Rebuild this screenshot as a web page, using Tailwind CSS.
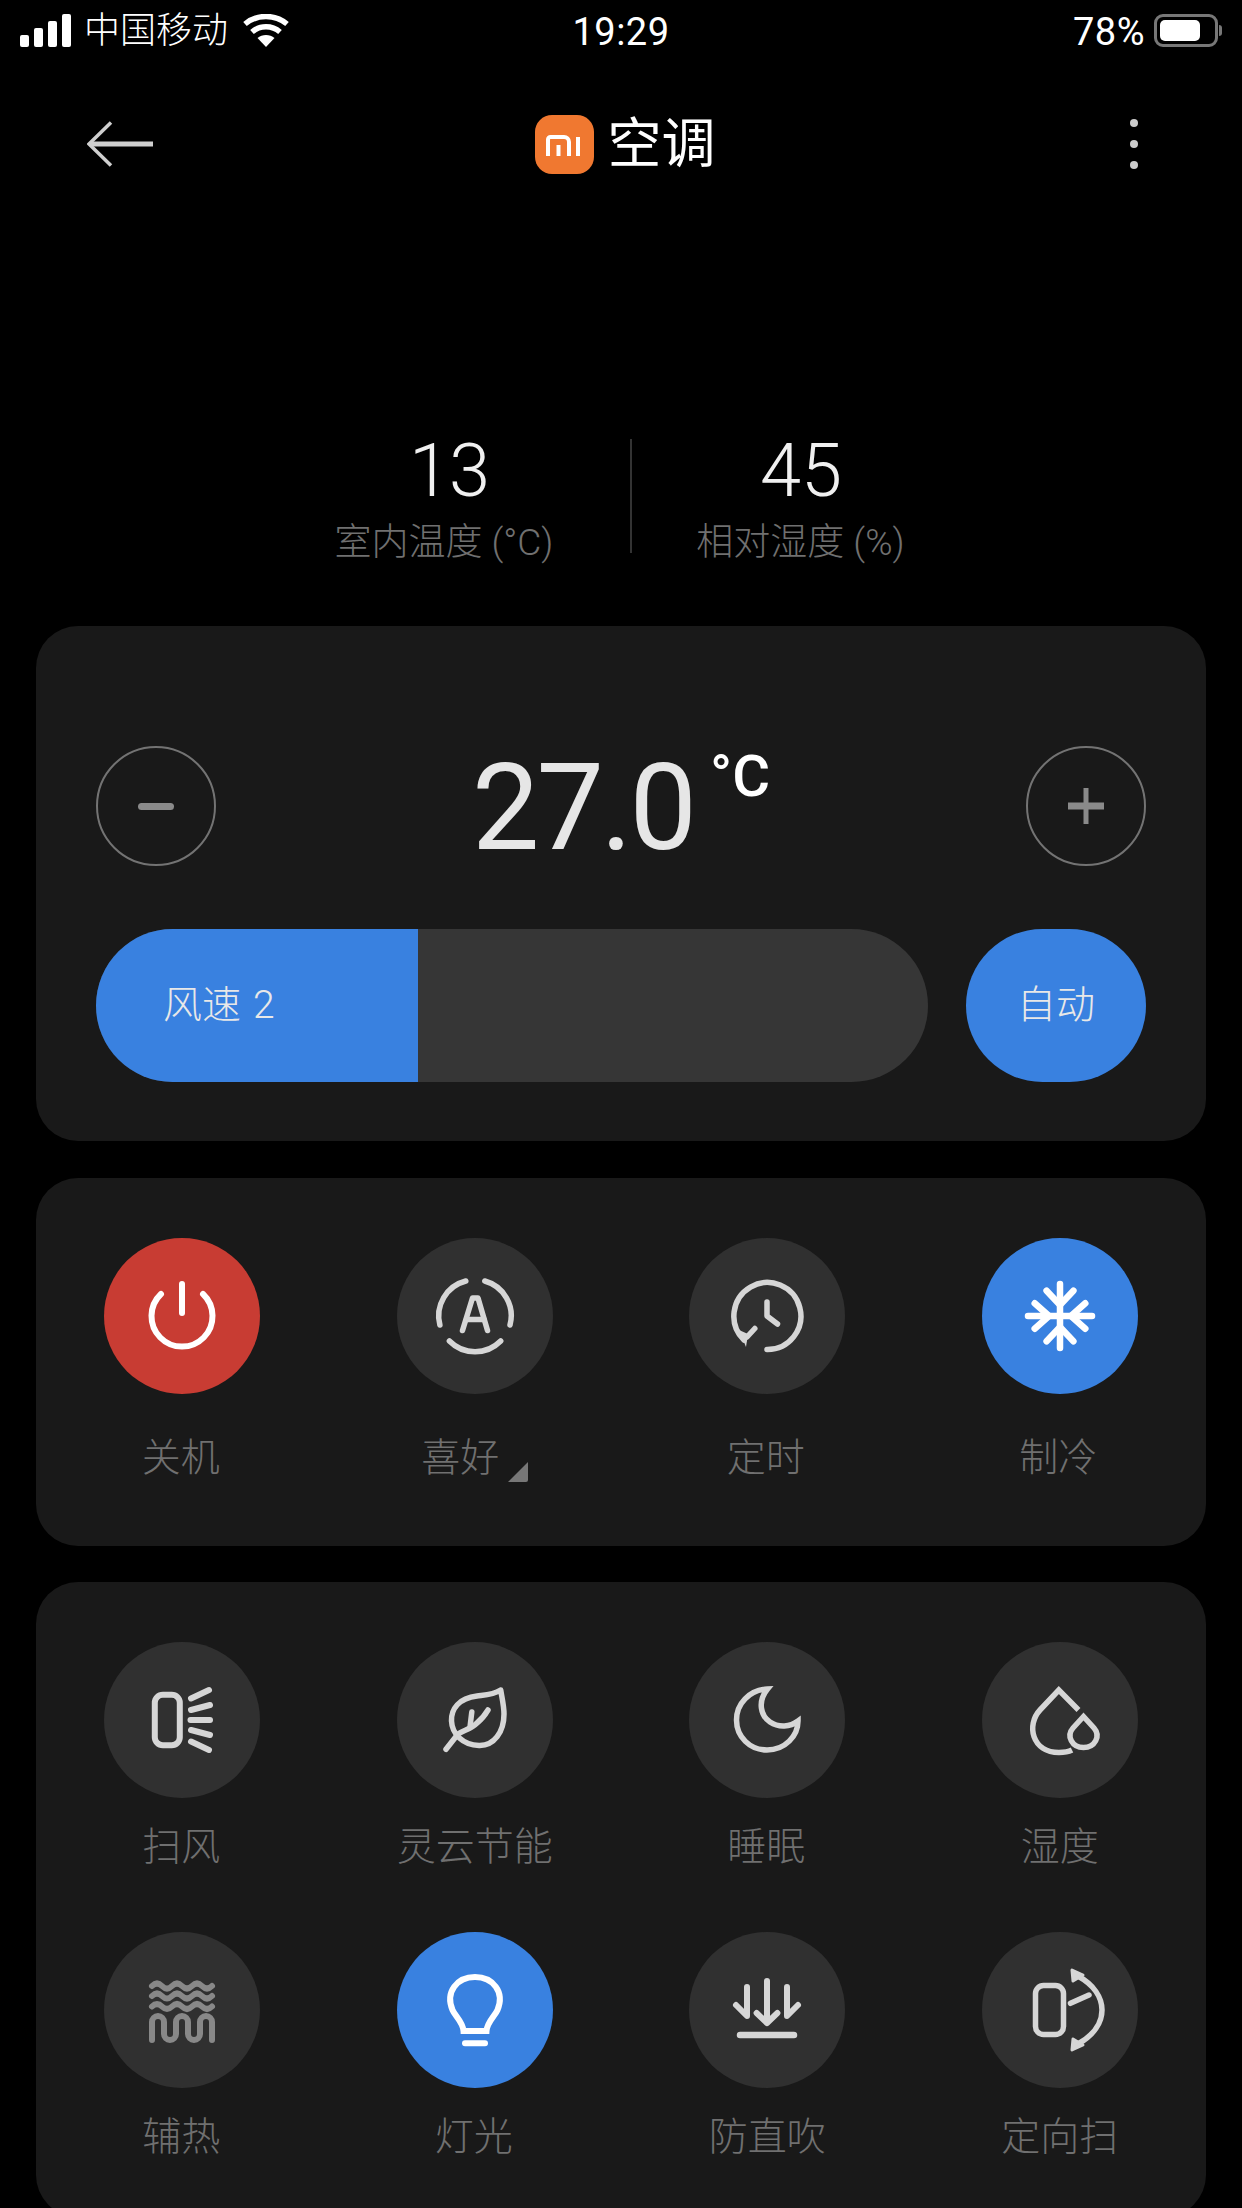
<!DOCTYPE html>
<html lang="zh-CN">
<head>
  <meta charset="UTF-8">
  <meta name="viewport" content="width=device-width, initial-scale=1.0">
  <title>空调</title>
  <script src="https://cdn.jsdelivr.net/npm/@tailwindcss/browser@4"></script>
</head>
<body class="bg-black">
<div class="w-[1242px] h-[2208px] overflow-hidden bg-black font-[Roboto,'Noto_Sans_CJK_SC',sans-serif]">

  <!-- Status bar -->
  <div class="h-[60px] grid grid-cols-3 items-center text-white text-[36px] pt-[1px]">
    <div class="flex items-center pl-[20px]">
      <div class="flex items-end gap-[5px] h-[33px]">
        <span class="w-[9px] h-[12px] rounded-[2px] bg-white"></span>
        <span class="w-[9px] h-[19px] rounded-[2px] bg-white"></span>
        <span class="w-[9px] h-[26px] rounded-[2px] bg-white"></span>
        <span class="w-[9px] h-[33px] rounded-[2px] bg-white"></span>
      </div>
      <span class="ml-[13px] leading-none whitespace-nowrap font-light">中国移动</span>
      <svg class="ml-[15px]" width="46" height="33" viewBox="0 0 46 33" fill="none" stroke="white" stroke-width="5.5">
        <path d="M2 10C14 0 32 0 44 10"/>
        <path d="M9 18C17 11 29 11 37 18"/>
        <path d="M23 33L14.500 24C19 20 27 20 31.500 24Z" fill="white" stroke="none"/>
      </svg>
    </div>
    <div class="text-center leading-none text-[38px] tracking-[0.5px] pt-[2px]">19:29</div>
    <div class="flex items-center justify-end pr-[20px]">
      <span class="leading-none text-[38px] tracking-[0.5px] pt-[2px]">78%</span>
      <div class="ml-[9px] w-[64px] h-[33px] rounded-[9px] border-[3px] border-[#777] p-[3px]">
        <div class="w-[40px] h-full rounded-[5px] bg-white"></div>
      </div>
      <span class="ml-[1px] w-[3px] h-[11px] rounded-r-full bg-[#777]"></span>
    </div>
  </div>

  <!-- Header -->
  <div class="h-[168px] grid grid-cols-[1fr_auto_1fr] items-center px-[87px]">
    <svg width="66" height="46" viewBox="0 0 66 46" fill="none" stroke="#cfcfcf">
      <path d="M66 23H4" stroke-width="5"/>
      <path d="M24 1.500L2 23L24 44.500" stroke-width="3.500"/>
    </svg>
    <div class="flex items-center pl-[8px]">
      <div class="w-[59px] h-[59px] rounded-[17px] bg-[#f07830] flex items-center justify-center">
        <svg class="mt-[3px]" width="36" height="22" viewBox="0 0 36 22" fill="none" stroke="white" stroke-width="4">
          <path d="M2 21V4.500a2.500 2.500 0 0 1 2.500-2.500H18a5 5 0 0 1 5 5V21"/>
          <path d="M12.500 10V21"/>
          <path d="M32 2V21"/>
        </svg>
      </div>
      <span class="ml-[14px] text-white text-[54px] leading-none pt-[2px]">空调</span>
    </div>
    <div class="flex flex-col items-end gap-[13px] mr-[17px]">
      <span class="w-[8px] h-[8px] rounded-full bg-[#ccc]"></span>
      <span class="w-[8px] h-[8px] rounded-full bg-[#ccc]"></span>
      <span class="w-[8px] h-[8px] rounded-full bg-[#ccc]"></span>
    </div>
  </div>

  <!-- Indoor readings -->
  <div class="h-[398px] pt-[208px] flex items-start">
    <div class="w-[630px] pl-[258px] text-center">
      <div class="pl-[10px] text-[#f0f0f0] text-[74px] leading-[70px] font-light tracking-[-1px]">13</div>
      <div class="mt-[13px] text-[#707070] text-[37px] leading-[48px] whitespace-nowrap font-light">室内温度 (°C)</div>
    </div>
    <div class="w-[2px] h-[114px] mt-[3px] bg-[#333]"></div>
    <div class="w-[340px] text-center">
      <div class="pr-[2px] text-[#f0f0f0] text-[74px] leading-[70px] font-light">45</div>
      <div class="mt-[13px] pr-[3px] text-[#707070] text-[37px] leading-[48px] whitespace-nowrap font-light">相对湿度 (%)</div>
    </div>
  </div>

  <!-- Temperature + fan speed -->
  <div class="mx-[36px] h-[515px] rounded-[42px] bg-[#191919] px-[60px] pt-[120px]">
    <div class="flex items-center justify-between h-[120px]">
      <div class="w-[120px] h-[120px] rounded-full border-[2.5px] border-[#737373] flex items-center justify-center">
        <span class="w-[36px] h-[7px] rounded-full bg-[#8a8a8a]"></span>
      </div>
      <div class="flex items-start text-[#e6e6e6]">
        <span class="mt-[3px] text-[120px] leading-[120px] tracking-[-3px]">27.0</span>
        <span class="ml-[16px] mt-[1px] text-white text-[58px] leading-[60px] font-medium">°C</span>
      </div>
      <div class="w-[120px] h-[120px] rounded-full border-[2.5px] border-[#737373] flex items-center justify-center">
        <svg width="36" height="36" viewBox="0 0 36 36" fill="none" stroke="#8a8a8a" stroke-linecap="round">
          <path d="M0 18H36" stroke-width="7"/>
          <path d="M18 0V36" stroke-width="5"/>
        </svg>
      </div>
    </div>
    <div class="mt-[63px] flex items-center">
      <div class="w-[833px] h-[153px] rounded-full overflow-hidden bg-[#363636]">
        <div class="w-[322px] h-full bg-[#3981e0] pl-[67px] flex items-center text-[#e8e8e8] text-[39px] leading-none font-light">风速<span class="ml-[12px]">2</span></div>
      </div>
      <div class="ml-[38px] w-[180px] h-[153px] rounded-full bg-[#3981e0] flex items-center justify-center text-[#e8e8e8] text-[39px] leading-none font-light">自动</div>
    </div>
  </div>

  <!-- Main controls -->
  <div class="mt-[37px] mx-[36px] h-[368px] rounded-[42px] bg-[#191919] pt-[60px] grid grid-cols-4 items-start">
    <div class="flex flex-col items-center">
      <div class="w-[156px] h-[156px] rounded-full bg-[#c83c33]">
        <svg width="156" height="156" viewBox="0 0 156 156" fill="none" stroke="white" stroke-width="6" stroke-linecap="round">
          <path d="M57 56A30.500 30.500 0 1 0 99 56"/>
          <path d="M78 46V75"/>
        </svg>
      </div>
      <div class="mt-[44px] pr-[3px] text-[#707070] text-[39px] leading-[40px] font-light">关机</div>
    </div>
    <div class="flex flex-col items-center">
      <div class="w-[156px] h-[156px] rounded-full bg-[#303030]">
        <svg width="156" height="156" viewBox="0 0 156 156" fill="none" stroke="#d6d6d6" stroke-width="5.500" stroke-linecap="round" stroke-linejoin="round">
          <path d="M68.800 43A36 36 0 0 0 42.900 87"/>
          <path d="M87.800 43A36 36 0 0 1 113 87"/>
          <path d="M52.400 103A36 36 0 0 0 103.700 103"/>
          <path d="M65.500 92.500L75.500 60H81L90.500 92.500"/>
          <path d="M69.500 81.500H87"/>
        </svg>
      </div>
      <div class="mt-[44px] flex items-start">
        <span class="text-[#707070] text-[39px] leading-[40px] font-light">喜好</span>
        <svg class="ml-[9px] mt-[24px]" width="20" height="20" viewBox="0 0 20 20">
          <path d="M20 0V18a2 2 0 0 1-2 2H0Z" fill="#777"/>
        </svg>
      </div>
    </div>
    <div class="flex flex-col items-center">
      <div class="w-[156px] h-[156px] rounded-full bg-[#303030]">
        <svg width="156" height="156" viewBox="0 0 156 156" fill="none" stroke="#d6d6d6" stroke-width="5.500" stroke-linecap="round" stroke-linejoin="round">
          <path d="M78 111.500A33.500 33.500 0 1 0 55 102"/>
          <path d="M78 64V78L88.500 86"/>
          <path d="M65.800 90.500L58 99"/>
          <path d="M50 92L57 109L59 96Z" fill="#d6d6d6" stroke="none"/>
        </svg>
      </div>
      <div class="mt-[44px] pr-[3px] text-[#707070] text-[39px] leading-[40px] font-light">定时</div>
    </div>
    <div class="flex flex-col items-center">
      <div class="w-[156px] h-[156px] rounded-full bg-[#3981e0]">
        <svg width="156" height="156" viewBox="0 0 156 156" fill="none" stroke="white" stroke-width="6.500" stroke-linecap="round" stroke-linejoin="round">
          <path d="M78 46V110"/>
          <path d="M46 78H110"/>
          <path d="M64.600 52.700L78 67L91.400 52.700"/>
          <path d="M64.600 103.300L78 89L91.400 103.300"/>
          <path d="M52.700 65.300L67 78L52.700 90.700"/>
          <path d="M103.300 65.300L89 78L103.300 90.700"/>
        </svg>
      </div>
      <div class="mt-[44px] pr-[3px] text-[#707070] text-[39px] leading-[40px] font-light">制冷</div>
    </div>
  </div>

  <!-- Function grid -->
  <div class="mt-[36px] mx-[36px] rounded-[42px] bg-[#191919] pt-[60px] pb-[60px] grid grid-cols-4 gap-y-[65px] items-start">
    <div class="flex flex-col items-center">
      <div class="w-[156px] h-[156px] rounded-full bg-[#303030]">
        <svg width="156" height="156" viewBox="0 0 156 156" fill="none" stroke="#d6d6d6" stroke-width="6" stroke-linecap="round">
          <rect x="50.800" y="52.700" width="25" height="50.600" rx="8"/>
          <path d="M87 56.500L105 48"/>
          <path d="M87 68L106 63"/>
          <path d="M86.500 78H106"/>
          <path d="M87 88L106 93"/>
          <path d="M87 99.500L105 108"/>
        </svg>
      </div>
      <div class="mt-[29px] pr-[2px] text-[#707070] text-[39px] leading-[40px] font-light">扫风</div>
    </div>
    <div class="flex flex-col items-center">
      <div class="w-[156px] h-[156px] rounded-full bg-[#303030]">
        <svg width="156" height="156" viewBox="0 0 156 156" fill="none" stroke="#d6d6d6" stroke-width="5.500" stroke-linecap="round" stroke-linejoin="round">
          <path d="M103.700 48C96 53 88 53 80 54C62 56 54 67 54.500 79C55 92 66 103 82 103.500C97 104 107 90 107 72C107 64 105 56 103.700 48Z"/>
          <path d="M49 107.300L61 92C67 88 74 87 80 81C85 77 88 73 91 68"/>
          <path d="M74.800 70L73 85"/>
        </svg>
      </div>
      <div class="mt-[29px] text-[#707070] text-[39px] leading-[40px] font-light">灵云节能</div>
    </div>
    <div class="flex flex-col items-center">
      <div class="w-[156px] h-[156px] rounded-full bg-[#303030]">
        <svg width="156" height="156" viewBox="0 0 156 156" fill="none" stroke="#d6d6d6" stroke-width="5.500" stroke-linejoin="miter">
          <path d="M78.500 47C60 48 47.500 62 47.500 78C47.500 95 61 108 78 108C96 108 109 94 109 79C101 85 90 86 81 80C72 74 68 60 78.500 47Z"/>
        </svg>
      </div>
      <div class="mt-[29px] pr-[2px] text-[#707070] text-[39px] leading-[40px] font-light">睡眠</div>
    </div>
    <div class="flex flex-col items-center">
      <div class="w-[156px] h-[156px] rounded-full bg-[#303030]">
        <svg width="156" height="156" viewBox="0 0 156 156" fill="none" stroke="#d6d6d6" stroke-width="5.500">
          <path d="M96.500 68L76.800 48L58 68C44 83 50 110.500 77 110.500C81 110.500 86 110 90 108"/>
          <path d="M101.500 74.500L91 86C84 94 90 105.500 101.500 105.500C113 105.500 119 94 112 86Z"/>
        </svg>
      </div>
      <div class="mt-[29px] text-[#707070] text-[39px] leading-[40px] font-light">湿度</div>
    </div>

    <div class="flex flex-col items-center">
      <div class="w-[156px] h-[156px] rounded-full bg-[#303030]">
        <svg width="156" height="156" viewBox="0 0 156 156" fill="none" stroke="#888" stroke-width="6" stroke-linecap="round" stroke-linejoin="round">
          <path d="M48 54q5-5 10 0t10 0t10 0t10 0t10 0t10 0"/>
          <path d="M48 64q5-5 10 0t10 0t10 0t10 0t10 0t10 0"/>
          <path d="M48 74.500q5-5 10 0t10 0t10 0t10 0t10 0t10 0"/>
          <path d="M48 108V90a6 6 0 0 1 12 0V102a6 6 0 0 0 12 0V90a6 6 0 0 1 12 0V102a6 6 0 0 0 12 0V90a6 6 0 0 1 12 0V108"/>
        </svg>
      </div>
      <div class="mt-[29px] pr-[2px] text-[#707070] text-[39px] leading-[40px] font-light">辅热</div>
    </div>
    <div class="flex flex-col items-center">
      <div class="w-[156px] h-[156px] rounded-full bg-[#3981e0]">
        <svg width="156" height="156" viewBox="0 0 156 156" fill="none" stroke="white" stroke-width="6">
          <path d="M66.500 99C66 90 58 84 55.500 78C48 60 60 45 78 45C96 45 108 60 100.500 78C98 84 90 90 89.500 99Z"/>
          <path d="M68 111.300H88" stroke-linecap="round"/>
        </svg>
      </div>
      <div class="mt-[29px] pr-[2px] text-[#707070] text-[39px] leading-[40px] font-light">灯光</div>
    </div>
    <div class="flex flex-col items-center">
      <div class="w-[156px] h-[156px] rounded-full bg-[#303030]">
        <svg width="156" height="156" viewBox="0 0 156 156" fill="none" stroke="#d6d6d6" stroke-width="6" stroke-linecap="round" stroke-linejoin="round">
          <path d="M78 49V90"/>
          <path d="M67.600 81L78 91L88.400 81"/>
          <path d="M58 55V84L47 73"/>
          <path d="M98 55V84L109 73"/>
          <path d="M51 103H105" stroke-width="6.500"/>
        </svg>
      </div>
      <div class="mt-[29px] text-[#707070] text-[39px] leading-[40px] font-light">防直吹</div>
    </div>
    <div class="flex flex-col items-center">
      <div class="w-[156px] h-[156px] rounded-full bg-[#303030]">
        <svg width="156" height="156" viewBox="0 0 156 156" fill="none" stroke="#d6d6d6" stroke-width="5.500" stroke-linecap="round">
          <rect x="53.500" y="53.500" width="28" height="49" rx="8"/>
          <path d="M88.500 71.300L107 63"/>
          <path d="M96 44C128 62 128 94 96 112"/>
          <path d="M90 38L91 49L101 43Z" fill="#d6d6d6" stroke="#d6d6d6" stroke-width="3" stroke-linejoin="round"/>
          <path d="M90 118L91 107L101 113Z" fill="#d6d6d6" stroke="#d6d6d6" stroke-width="3" stroke-linejoin="round"/>
        </svg>
      </div>
      <div class="mt-[29px] text-[#707070] text-[39px] leading-[40px] font-light">定向扫</div>
    </div>
  </div>

</div>
</body>
</html>
